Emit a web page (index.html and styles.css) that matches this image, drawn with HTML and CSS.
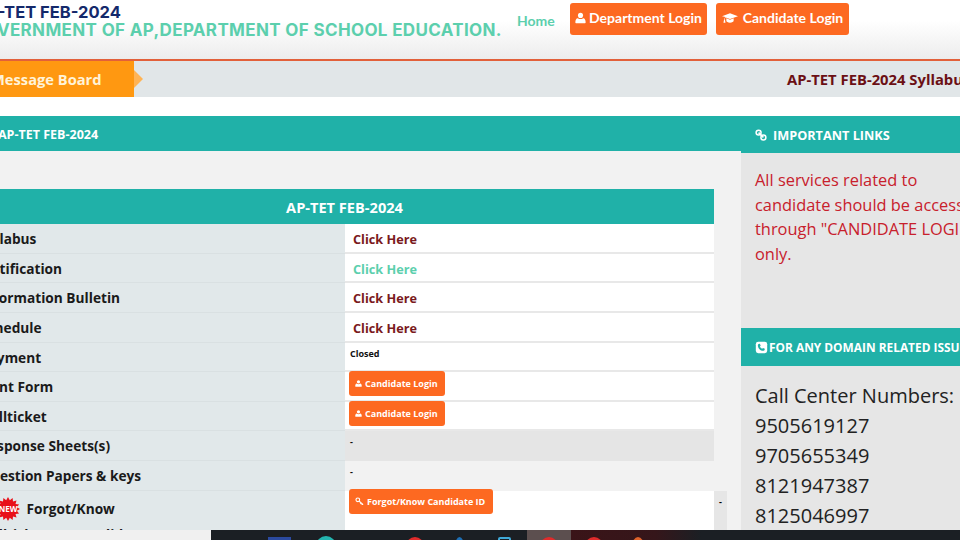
FILE: index.html
```html
<!DOCTYPE html>
<html lang="en">
<head>
    <meta charset="UTF-8">
    <meta name="viewport" content="width=device-width, initial-scale=1.0">
    <title>AP-TET FEB-2024</title>
    <link rel="stylesheet" href="styles.css">
</head>
<body>
    <div class="viewport">
        <div class="page">
            <header class="site-header">
                <div class="brand">
                    <h1>AP-TET FEB-2024</h1>
                    <h2>GOVERNMENT OF AP,DEPARTMENT OF SCHOOL EDUCATION.</h2>
                </div>
                <nav class="nav">
                    <a class="nav-home" href="#">Home</a>
                    <a class="btn-nav btn-dept" href="#">
                        <svg class="icon" viewBox="0 0 16 16"><circle cx="8" cy="4.2" r="3.7"/><path d="M1.5 15.5c-.6 0-1-.4-1-1 0-3.600 1.300-6.300 3.600-6.300 1 .8 2.400 1.300 3.900 1.300s2.900-.5 3.900-1.300c2.300 0 3.600 2.700 3.600 6.300 0 .6-.4 1-1 1z"/></svg>
                        Department Login
                    </a>
                    <a class="btn-nav btn-cand" href="#">
                        <svg class="icon icon-cap" viewBox="0 0 24 16"><path d="M12 1 24 5.200 12 9.400 5.500 7.100c-.9.700-1.400 1.800-1.500 3 .5.300.7.700.6 1.200l.6 3.700H2.200l.7-3.700c-.1-.5.100-1 .5-1.200.1-1.500.7-2.900 1.700-3.700L0 5.200z"/><path d="M6.500 8.500 12 10.500l5.500-2v3.700c0 1.500-2.500 2.800-5.500 2.800s-5.500-1.300-5.500-2.800z"/></svg>
                        Candidate Login
                    </a>
                </nav>
            </header>

            <div class="message-bar">
                <div class="message-label">Message Board</div>
                <div class="message-text">AP-TET FEB-2024 Syllabus</div>
            </div>

            <div class="columns">
                <main class="main-col">
                    <div class="section-title">AP-TET FEB-2024</div>
                    <div class="main-body">
                        <div class="info-table">
                            <div class="table-head">AP-TET FEB-2024</div>
                            <div class="row">
                                <div class="cell-label">Syllabus</div>
                                <div class="cell-value"><a class="link" href="#">Click Here</a></div>
                            </div>
                            <div class="row">
                                <div class="cell-label">Notification</div>
                                <div class="cell-value"><a class="link link-green" href="#">Click Here</a></div>
                            </div>
                            <div class="row">
                                <div class="cell-label">Information Bulletin</div>
                                <div class="cell-value"><a class="link" href="#">Click Here</a></div>
                            </div>
                            <div class="row">
                                <div class="cell-label">Schedule</div>
                                <div class="cell-value"><a class="link" href="#">Click Here</a></div>
                            </div>
                            <div class="row">
                                <div class="cell-label">Payment</div>
                                <div class="cell-value cell-small">Closed</div>
                            </div>
                            <div class="row">
                                <div class="cell-label">Print Form</div>
                                <div class="cell-value cell-btn">
                                    <a class="btn-small" href="#">
                                        <svg class="icon-small" viewBox="0 0 16 16"><circle cx="8" cy="4.200" r="3.700"/><path d="M1.500 15.500c-.6 0-1-.4-1-1 0-3.600 1.300-6.300 3.600-6.300 1 .8 2.400 1.300 3.900 1.300s2.900-.5 3.900-1.300c2.300 0 3.600 2.700 3.600 6.300 0 .6-.4 1-1 1z"/></svg>
                                        Candidate Login
                                    </a>
                                </div>
                            </div>
                            <div class="row">
                                <div class="cell-label">Hallticket</div>
                                <div class="cell-value cell-btn">
                                    <a class="btn-small" href="#">
                                        <svg class="icon-small" viewBox="0 0 16 16"><circle cx="8" cy="4.200" r="3.700"/><path d="M1.500 15.500c-.6 0-1-.4-1-1 0-3.600 1.300-6.300 3.600-6.300 1 .8 2.400 1.300 3.900 1.300s2.900-.5 3.900-1.300c2.300 0 3.600 2.700 3.600 6.300 0 .6-.4 1-1 1z"/></svg>
                                        Candidate Login
                                    </a>
                                </div>
                            </div>
                            <div class="row">
                                <div class="cell-label">Response Sheets(s)</div>
                                <div class="cell-value cell-small cell-grey">-</div>
                            </div>
                            <div class="row">
                                <div class="cell-label">Question Papers &amp; keys</div>
                                <div class="cell-value cell-small cell-light">-</div>
                            </div>
                            <div class="row row-last">
                                <div class="cell-label cell-tall">
                                    <svg class="new-badge" viewBox="0 0 24 24"><polygon points="24,12 20.800,13.800 23.100,16.600 19.500,17 20.500,20.500 17,19.500 16.600,23.100 13.800,20.800 12,24 10.200,20.800 7.400,23.100 7,19.500 3.500,20.500 4.500,17 .9,16.600 3.200,13.800 0,12 3.200,10.200 .9,7.400 4.500,7 3.500,3.500 7,4.500 7.400,.9 10.200,3.200 12,0 13.800,3.200 16.600,.9 17,4.500 20.500,3.500 19.500,7 23.100,7.400 20.800,10.200"/><text x="12" y="15" text-anchor="middle">NEW</text></svg>
                                    Forgot/Know<br>Hallticket No/Candidate ID
                                </div>
                                <div class="cell-value cell-btn">
                                    <a class="btn-small" href="#">
                                        <svg class="icon-small" viewBox="0 0 16 16"><circle cx="5" cy="5" r="3.300" class="ring"/><path d="M7.500 7.500 14.500 13.500M11 10.500 9.500 12.500M13 12 11.800 13.800" class="ring"/></svg>
                                        Forgot/Know Candidate ID
                                    </a>
                                </div>
                                <div class="cell-extra">-</div>
                            </div>
                        </div>
                    </div>
                </main>

                <aside class="side-col">
                    <div class="side-title">
                        <svg class="icon-link" viewBox="0 0 16 16"><circle cx="4.800" cy="4.800" r="3.300"/><circle cx="11.200" cy="11.200" r="3.300"/><path d="M4.800 4.800 11.200 11.200"/></svg>
                        IMPORTANT LINKS
                    </div>
                    <div class="side-panel side-notice">
                        All services related to<br>
                        candidate should be accessed<br>
                        through "CANDIDATE LOGIN"<br>
                        only.
                    </div>
                    <div class="side-title side-title-small">
                        <svg class="icon-phone" viewBox="0 0 16 16"><rect x="1" y="1" width="14" height="14" rx="3" fill="#fff"/><path d="M4.500 3.800 6 3.500l1 2.300-1 .9c.6 1.300 1.600 2.300 2.900 2.900l.9-1 2.300 1-.3 1.500c-.2.700-.7 1-1.300 1C7 12.400 3.600 9 3.500 5.100c0-.6.400-1.100 1-1.300z" fill="#20b1a8"/></svg>
                        FOR ANY DOMAIN RELATED ISSUES
                    </div>
                    <div class="side-panel side-numbers">
                        <div>Call Center Numbers:</div>
                        <div>9505619127</div>
                        <div>9705655349</div>
                        <div>8121947387</div>
                        <div>8125046997</div>
                    </div>
                </aside>
            </div>
        </div>
    </div>

    <div class="taskbar">
        <div class="taskbar-gap"></div>
        <div class="taskbar-icons">
            <div class="slot"><span class="tb-icon tb-blue"></span></div>
            <div class="slot"><span class="tb-icon tb-teal"></span></div>
            <div class="slot"></div>
            <div class="slot"><span class="tb-icon tb-red"></span></div>
            <div class="slot"><span class="tb-icon tb-navy"></span></div>
            <div class="slot"><span class="tb-icon tb-box"></span></div>
            <div class="slot slot-active"><span class="tb-icon tb-red"></span></div>
            <div class="open-apps">
                <div class="slot"><span class="tb-icon tb-red"></span></div>
                <div class="slot"><span class="tb-icon tb-orange"></span></div>
            </div>
        </div>
    </div>
</body>
</html>
```

FILE: styles.css
```css
* {
    box-sizing: border-box;
}
body {
    margin: 0;
    height: 540px;
    overflow: hidden;
    display: flex;
    flex-direction: column;
    font-family: "Open Sans", sans-serif;
    background-color: white;
}
a {
    text-decoration: none;
}
.viewport {
    height: 530px;
    overflow: hidden;
}
.page {
    width: 1100px;
    margin-left: -40px;
}

/* header */
.site-header {
    display: flex;
    height: 61px;
    padding-left: 15px;
    background: linear-gradient(to bottom, #fff 0%, #fff 35%, #ececec 100%);
    border-bottom: 2px solid #e2603a;
}
.brand {
    width: 542px;
    padding-top: 3px;
    white-space: nowrap;
    font-family: "Inter", sans-serif;
}
.brand h1 {
    margin: 0;
    font-size: 16.5px;
    line-height: 18px;
    font-weight: 700;
    color: #14296b;
}
.brand h2 {
    margin: 0 0 0 -4px;
    font-size: 17px;
    line-height: 18px;
    letter-spacing: 0.35px;
    font-weight: 700;
    color: #5ccfad;
}
.nav {
    display: flex;
    align-items: flex-start;
    padding-top: 3px;
    font-family: "Lato", sans-serif;
}
.nav-home {
    width: 53px;
    margin-top: 9px;
    font-size: 14px;
    font-weight: 700;
    color: #5ccfad;
}
.btn-nav {
    display: flex;
    align-items: center;
    justify-content: center;
    gap: 3px;
    height: 32px;
    padding-bottom: 3px;
    border-radius: 3px;
    background-color: #fd6921;
    color: white;
    font-size: 14px;
    font-weight: 700;
}
.btn-dept {
    width: 137px;
    margin-right: 9px;
}
.btn-cand {
    width: 133px;
}
.icon {
    width: 11px;
    height: 12px;
    fill: white;
}
.icon-cap {
    width: 16px;
    margin-right: 2px;
}

/* message board */
.message-bar {
    display: flex;
    align-items: center;
    height: 36px;
    background-color: #e1e6e8;
    white-space: nowrap;
}
.message-label {
    position: relative;
    width: 174px;
    height: 36px;
    padding-left: 31px;
    background-color: #ff9811;
    color: #fff3d9;
    font-size: 14.7px;
    font-weight: 700;
    line-height: 37px;
}
.message-label::after {
    content: "";
    position: absolute;
    left: 100%;
    top: 9px;
    border-left: 9px solid #ffb354;
    border-top: 9px solid transparent;
    border-bottom: 9px solid transparent;
}
.message-text {
    margin-left: 653px;
    font-size: 14.8px;
    font-weight: 700;
    color: #6b0f14;
}

/* main column */
.columns {
    display: flex;
    margin-top: 19px;
}
.main-col {
    width: 781px;
}
.section-title {
    height: 35px;
    padding-left: 38px;
    background-color: #20b1a8;
    color: white;
    font-size: 12.5px;
    font-weight: 700;
    line-height: 37px;
}
.main-body {
    height: 380px;
    padding: 38px 27px 0 15px;
    background-color: #f2f2f2;
}
.table-head {
    height: 35px;
    background-color: #20b1a8;
    color: white;
    font-size: 14.6px;
    font-weight: 700;
    line-height: 37px;
    text-align: center;
}
.row {
    display: grid;
    grid-template-columns: 370px 1fr;
    grid-template-rows: 100%;
    height: 29.65px;
}
.row-last {
    grid-template-columns: 370px 369px 13px;
    margin-right: -13px;
    height: 60px;
}
.cell-label {
    padding-left: 5px;
    background-color: #e1e8ea;
    border-bottom: 1px solid #d9e0e2;
    color: #1a1a1a;
    font-size: 13.7px;
    font-weight: 700;
    line-height: 30px;
    white-space: nowrap;
}
.cell-tall {
    line-height: 26px;
    padding-top: 5px;
    border-bottom: none;
}
.cell-value {
    padding-left: 8px;
    background-color: white;
    border-bottom: 2px solid #e8e8e8;
}
.link {
    font-size: 12.7px;
    font-weight: 700;
    line-height: 30px;
    color: #7a1a20;
}
.link-green {
    color: #5ccfad;
}
.cell-small {
    padding-left: 5px;
    font-size: 9px;
    font-weight: 700;
    line-height: 22px;
    color: #111;
}
.cell-grey {
    background-color: #e5e5e5;
    border-bottom: none;
}
.cell-light {
    background-color: #f2f2f2;
    border-bottom: none;
}
.cell-btn {
    padding-left: 4px;
}
.btn-small {
    display: inline-flex;
    align-items: center;
    gap: 3px;
    height: 25px;
    margin-top: -1px;
    padding: 0 7px 0 6px;
    border-radius: 3px;
    background-color: #fd6921;
    color: white;
    font-size: 9px;
    font-weight: 700;
    vertical-align: top;
}
.icon-small {
    width: 7px;
    height: 9px;
    fill: white;
}
.ring {
    fill: none;
    stroke: white;
    stroke-width: 2;
}
.row-last .btn-small {
    margin-top: -2px;
    padding-right: 8px;
}
.row-last .icon-small {
    width: 9px;
    height: 9px;
}
.cell-extra {
    padding-left: 5px;
    background-color: #e6e6e6;
    font-size: 9px;
    font-weight: 700;
    line-height: 22px;
}
.new-badge {
    width: 24px;
    height: 24px;
    margin: 0 3px -7px 16px;
    fill: #e8111a;
}
.new-badge text {
    fill: white;
    font-size: 8px;
    font-weight: 700;
}

/* right column */
.side-col {
    width: 319px;
    white-space: nowrap;
}
.side-title {
    display: flex;
    align-items: center;
    height: 37px;
    padding-left: 14px;
    padding-top: 1px;
    gap: 6px;
    background-color: #20b1a8;
    color: white;
    font-size: 12.7px;
    font-weight: 700;
}
.side-title-small {
    height: 38px;
    padding-top: 0;
    gap: 1px;
    font-size: 11.9px;
}
.icon-link {
    width: 12px;
    height: 12px;
    fill: none;
    stroke: white;
    stroke-width: 2;
}
.icon-phone {
    width: 13px;
    height: 13px;
}
.side-panel {
    padding-left: 14px;
    background-color: #e6e6e6;
}
.side-notice {
    height: 175px;
    padding-top: 15px;
    color: #c8202c;
    font-size: 16.4px;
    line-height: 24.5px;
}
.side-numbers {
    height: 170px;
    padding-top: 14.5px;
    color: #222;
    font-size: 20px;
    line-height: 30px;
}

/* windows taskbar along the bottom of the screen */
.taskbar {
    display: flex;
    height: 10px;
    flex: none;
}
.taskbar-gap {
    width: 211px;
    background-color: #f0f0f0;
}
.taskbar-icons {
    flex: 1;
    display: flex;
    padding-left: 47.5px;
    background-color: #1b1f24;
    overflow: hidden;
}
.slot {
    width: 44.7px;
    display: flex;
    justify-content: center;
    padding-top: 7px;
}
.slot-active {
    background-color: #5c4f4f;
}
.open-apps {
    display: flex;
    width: 130px;
    background: linear-gradient(to right, #3a1418 0%, #35161a 65%, #1b1f24 100%);
}
.tb-icon {
    display: block;
    flex: none;
    width: 18px;
    height: 18px;
    border-radius: 50%;
}
.tb-blue {
    width: 23px;
    margin-right: 2px;
    border-radius: 0;
    background-color: #2b4aa0;
}
.tb-teal {
    width: 20px;
    height: 20px;
    margin-top: -1px;
    background-color: #24b5b0;
}
.tb-red {
    background-color: #e02b2b;
}
.tb-navy {
    width: 9px;
    background-color: #1e6fb5;
}
.tb-box {
    width: 13px;
    border-radius: 2px;
    border: 2px solid #3fa9d8;
    background-color: transparent;
}
.tb-orange {
    width: 12px;
    background-color: #e0622a;
}
```
